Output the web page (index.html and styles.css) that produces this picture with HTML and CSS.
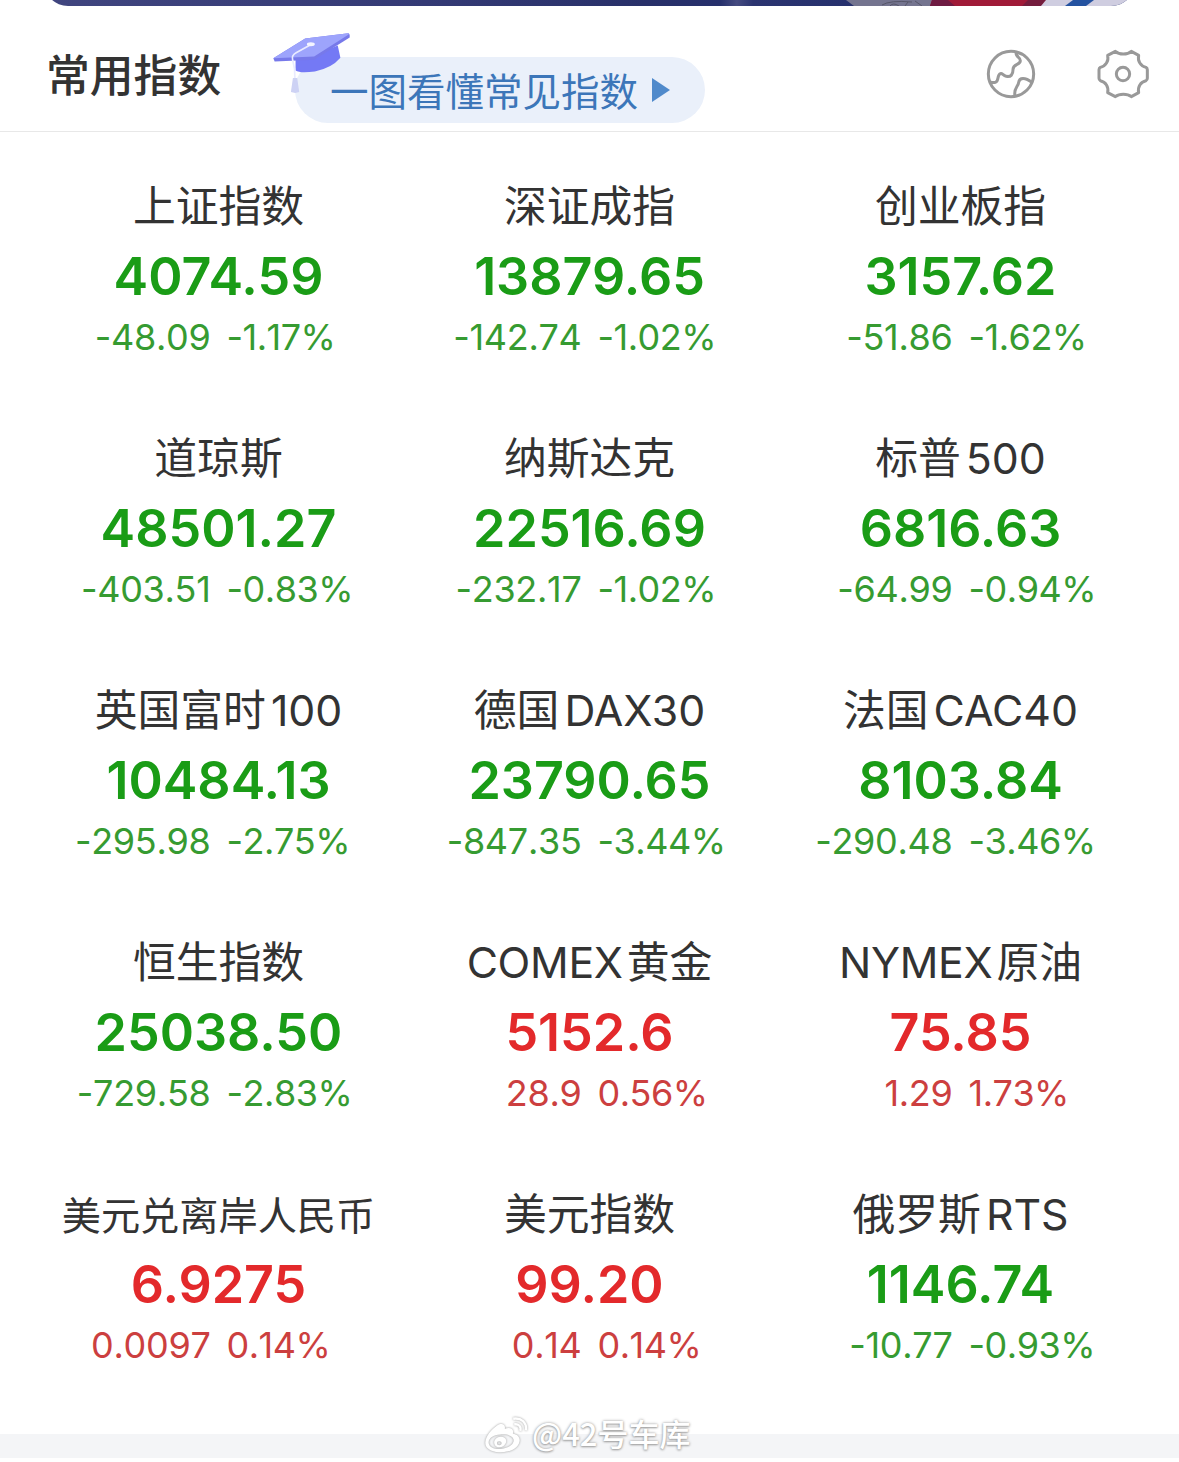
FILE: index.html
```html
<!DOCTYPE html>
<html lang="zh-CN">
	<head>
		<meta charset="utf-8">
		<title>常用指数</title>
		<link rel="stylesheet" href="styles.css">
	</head>
	<body>
		<div class="banner-wrap">
			<div class="banner">
				<svg viewBox="845 0 290 6">
					<path d="M846 0 H940 V6 H854 Z" fill="#74748f"/>
					<path d="M890 6 Q893 2 899 6 M905 6 L908 2 M915 1 L922 6 M882 5 Q890 0 912 2" fill="none" stroke="#565668" stroke-width="1"/>
					<path d="M932 0 H1050 L1041 6 H930 Z" fill="#a01a38"/>
					<path d="M932 0 H948 L955 6 H930 Z" fill="#6e1b42"/>
					<path d="M1028 0 H1046 L1041 6 H1022 Z" fill="#741d3d"/>
					<path d="M1046 0 H1135 V6 H1041 Z" fill="#cfcde0"/>
					<path d="M1073 0 H1094 L1086 6 H1065 Z" fill="#2452a0"/>
				</svg>
			</div>
		</div>

		<div class="header">
			<h1>常用指数</h1>
			<a class="guide">
				<svg class="cap" viewBox="30 30 250 200">
					<path d="M107 112 L107 151 Q120 160 165 154 Q215 145 242 113 L234 76 L165 105 Z" fill="#7479f5"/>
					<path d="M40 114 L136 55 L266 39 Q271 40 270 52 L163 119 L44 124 Z" fill="#7779ea"/>
					<path d="M40 114 L136 55 L266 39 L267 43 L163 109 Z" fill="#9da4fc"/>
					<path d="M155 72 L110 97 Q94 106 98 118 Q106 145 105 175" fill="none" stroke="#e9ebff" stroke-width="5"/>
					<ellipse cx="153" cy="72" rx="12" ry="6" fill="#f4f5ff"/>
					<path d="M99 174 H112 L118 216 Q106 221 93 216 Z" fill="#cdd2f4"/>
				</svg>
				<span>一图看懂常见指数</span>
				<svg class="arrow" viewBox="0 0 18 24"><path d="M0 0 L18 12 L0 24 Z" fill="#508acb"/></svg>
			</a>
			<div class="tools">
				<svg class="icon" viewBox="39 33 168 168">
					<circle cx="123" cy="117" r="68"/>
					<path d="M138 50 C137 69 151 65 151 77 C151 90 128 86 129 104 C129 118 123 127 109 124 C98 121 97 113 91 116 C80 121 88 138 76 142 Q70 144 60 141"/>
					<path d="M187 143 C165 126 148 127 146 142 C145 155 130 160 135 183"/>
				</svg>
				<svg class="icon" viewBox="375 33 168 168">
					<path d="M436 49 C448 60 472 60 484 49 L506 61 C502 78 512 93 528 97 Q532 99 532 104 V130 Q532 135 528 137 C512 140 502 156 506 173 L484 185 C472 175 448 175 436 185 L413 173 C417 156 407 140 391 137 Q387 135 387 130 V104 Q387 99 391 97 C407 93 417 78 413 61 Z"/>
					<circle cx="459" cy="117" r="20"/>
				</svg>
			</div>
		</div>

		<div class="grid">
			<div class="item down">
				<div class="name">上证指数</div>
				<div class="price">4074.59</div>
				<div class="change"><span>-48.09</span><span>-1.17%</span></div>
			</div>
			<div class="item down">
				<div class="name">深证成指</div>
				<div class="price">13879.65</div>
				<div class="change"><span>-142.74</span><span>-1.02%</span></div>
			</div>
			<div class="item down">
				<div class="name">创业板指</div>
				<div class="price">3157.62</div>
				<div class="change"><span>-51.86</span><span>-1.62%</span></div>
			</div>

			<div class="item down">
				<div class="name">道琼斯</div>
				<div class="price">48501.27</div>
				<div class="change"><span>-403.51</span><span>-0.83%</span></div>
			</div>
			<div class="item down">
				<div class="name">纳斯达克</div>
				<div class="price">22516.69</div>
				<div class="change"><span>-232.17</span><span>-1.02%</span></div>
			</div>
			<div class="item down">
				<div class="name">标普<b>500</b></div>
				<div class="price">6816.63</div>
				<div class="change"><span>-64.99</span><span>-0.94%</span></div>
			</div>

			<div class="item down">
				<div class="name">英国富时<b>100</b></div>
				<div class="price">10484.13</div>
				<div class="change"><span>-295.98</span><span>-2.75%</span></div>
			</div>
			<div class="item down">
				<div class="name">德国<b>DAX30</b></div>
				<div class="price">23790.65</div>
				<div class="change"><span>-847.35</span><span>-3.44%</span></div>
			</div>
			<div class="item down">
				<div class="name">法国<b>CAC40</b></div>
				<div class="price">8103.84</div>
				<div class="change"><span>-290.48</span><span>-3.46%</span></div>
			</div>

			<div class="item down">
				<div class="name">恒生指数</div>
				<div class="price">25038.50</div>
				<div class="change"><span>-729.58</span><span>-2.83%</span></div>
			</div>
			<div class="item up">
				<div class="name"><b class="first">COMEX</b>黄金</div>
				<div class="price">5152.6</div>
				<div class="change"><span>28.9</span><span>0.56%</span></div>
			</div>
			<div class="item up">
				<div class="name"><b class="first">NYMEX</b>原油</div>
				<div class="price">75.85</div>
				<div class="change"><span>1.29</span><span>1.73%</span></div>
			</div>

			<div class="item up">
				<div class="name long">美元兑离岸人民币</div>
				<div class="price">6.9275</div>
				<div class="change"><span>0.0097</span><span>0.14%</span></div>
			</div>
			<div class="item up">
				<div class="name">美元指数</div>
				<div class="price">99.20</div>
				<div class="change"><span>0.14</span><span>0.14%</span></div>
			</div>
			<div class="item down">
				<div class="name">俄罗斯<b>RTS</b></div>
				<div class="price">1146.74</div>
				<div class="change"><span>-10.77</span><span>-0.93%</span></div>
			</div>
		</div>

		<div class="footer">
			<div class="watermark">
				<svg viewBox="160 36 140 116">
					<path fill-rule="evenodd" d="M202 67 C215 58 228 63 225 77 C240 72 253 76 249 91 C262 94 271 102 269 114 C265 136 238 148 208 147 C181 146 165 133 167 116 C169 99 184 79 202 67 Z M211 94 C190 95 175 106 177 120 C179 133 195 139 214 137 C237 135 254 123 251 109 C249 98 233 92 211 94 Z"/>
					<path fill-rule="evenodd" d="M212 101 C199 102 191 112 194 122 C197 133 211 135 220 129 C231 122 232 109 224 104 Q219 100 212 101 Z M208 114 a7 6 0 1 0 1 12 a7 6 0 1 0 -1 -12 Z"/>
					<path class="wave" d="M250 47 C274 43 291 59 288 82 M253 64 C266 61 275 71 271 83"/>
				</svg>
				<span>@42号车库</span>
			</div>
		</div>
	</body>
</html>
```
FILE: styles.css
```css
* {
	box-sizing: border-box;
}

body {
	margin: 0;
	background: #fff;
	color: #333;
	font-family: Inter, "Noto Sans CJK SC", sans-serif;
}

/* only the bottom edge of the banner is on screen */
.banner-wrap {
	display: flex;
	align-items: flex-end;
	height: 6px;
	padding: 0 44px;
	overflow: hidden;
}

.banner {
	display: flex;
	align-items: flex-end;
	justify-content: flex-end;
	flex: 1;
	height: 60px;
	border-radius: 24px;
	overflow: hidden;
	background: linear-gradient(90deg, #40457f 0, #343a75 35%, #283069 55%, #26306c 62%, #454b80 63.5%, #2b3470 65%, #25306d 75%);
}

.banner svg {
	width: 290px;
	height: 6px;
}

.header {
	display: flex;
	align-items: flex-start;
	height: 126px;
	padding: 0 28px 0 46px;
	border-bottom: 1px solid #e8e8e8;
}

h1 {
	margin: 37px 0 0;
	width: 249px;
	font-size: 43.8px;
	line-height: 68px;
	font-weight: 500;
	white-space: nowrap;
}

.guide {
	position: relative;
	display: flex;
	align-items: center;
	width: 410px;
	height: 66px;
	margin-top: 51px;
	padding-left: 35px;
	border-radius: 33px;
	background: #eaf0fa;
	color: #3c76b9;
	font-size: 38.5px;
	white-space: nowrap;
}

.guide span {
	padding-bottom: 3px;
}

.cap {
	position: absolute;
	left: -25px;
	top: -27px;
	width: 83px;
	height: 67px;
}

.arrow {
	width: 18px;
	height: 24px;
	margin-left: 14px;
}

.tools {
	display: flex;
	gap: 56px;
	margin: 40px 0 0 auto;
}

.icon {
	width: 56px;
	height: 56px;
	fill: none;
	stroke: #999;
	stroke-width: 9;
	stroke-linejoin: round;
}

.grid {
	display: grid;
	grid-template-columns: repeat(3, 371px);
	grid-auto-rows: 252px;
	padding: 43px 33px 0;
	height: 1302px;
}

.item {
	text-align: center;
	white-space: nowrap;
}

.name {
	height: 64px;
	line-height: 64px;
	font-size: 42.8px;
}

.name b {
	margin-left: 5px;
	font-weight: 400;
	font-size: 42.8px;
}

.name b.first {
	margin: 0 4px 0 0;
	letter-spacing: -0.3px;
}

.name.long {
	font-size: 39.2px;
	line-height: 65px;
}

.price {
	height: 75px;
	line-height: 76px;
	font-size: 52px;
	font-weight: 600;
}

.change {
	display: grid;
	grid-template-columns: 1fr 1fr;
	gap: 16px;
	height: 46px;
	line-height: 46px;
	font-size: 36px;
	font-kerning: none;
	text-align: left;
}

.change span {
	letter-spacing: -0.5px;
}

.change span:first-child {
	text-align: right;
	letter-spacing: -0.3px;
}

.down .price {
	color: #1a9c16;
}

.down .change {
	color: #369b31;
}

.up .price {
	color: #e3292b;
}

.up .change {
	color: #cc3f3f;
}

.footer {
	position: relative;
	height: 24px;
	background: #f4f5f7;
}

.watermark {
	position: absolute;
	left: 483px;
	top: -22px;
	display: flex;
	align-items: center;
	gap: 2px;
	height: 44px;
	color: #fff;
	font-family: "Noto Sans CJK SC", sans-serif;
	font-size: 31px;
	font-weight: 500;
	text-shadow: 0 0 3px #999, 0 1px 2px #aaa;
	white-space: nowrap;
}

.watermark span {
	padding-bottom: 4px;
}

.watermark svg {
	width: 47px;
	height: 39px;
	fill: #fff;
	filter: drop-shadow(0 0 1px #999);
}

.watermark .wave {
	fill: none;
	stroke: #fff;
	stroke-width: 7;
}
```
